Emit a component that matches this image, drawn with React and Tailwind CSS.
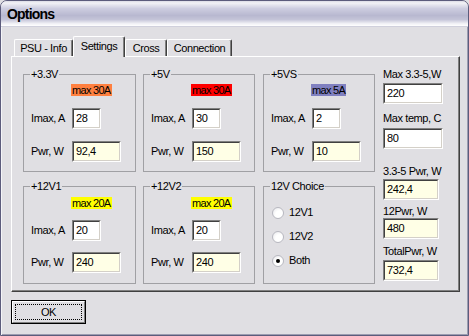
import React from 'react';

const FONT = "font-['Liberation_Sans',Arial,sans-serif] tracking-[-0.4px]";

// sunken edit box, classic windows look
const Edit = ({ value, w, yellow }) => (
  <div className={`h-[21px] ${w} border border-t-[#808080] border-l-[#808080] border-b-white border-r-white`}>
    <div
      className={`h-full flex items-center pl-[2px] text-[11px] leading-[13px] border border-t-[#404040] border-l-[#404040] border-b-[#d4d0c8] border-r-[#d4d0c8] ${
        yellow ? 'bg-[#ffffe6]' : 'bg-white'
      }`}
    >
      {value}
    </div>
  </div>
);

const Group = ({ title, w, children }) => (
  <fieldset className={`${w} h-[104px] border border-[#a0a0a4] p-0 m-0 min-w-0`}>
    <legend className="ml-[6px] px-px text-[11px] leading-[13px]">{title}</legend>
    {children}
  </fieldset>
);

const Rail = ({ title, w, max, maxBg, maxW, imax, pwr, top, gap }) => (
  <Group title={title} w={w}>
    <div className={`${top} ml-[47px] ${maxW} h-[12px] ${maxBg} text-[11px] leading-[12px] tracking-[-0.7px] pl-px whitespace-nowrap`}>
      {max}
    </div>
    <div className={`${gap} flex items-center`}>
      <span className="pl-[7px] w-[48px] text-[11px] leading-[13px]">Imax, A</span>
      <Edit value={imax} w="w-[29px]" />
    </div>
    <div className={`${gap} flex items-center`}>
      <span className="pl-[7px] w-[48px] text-[11px] leading-[13px]">Pwr, W</span>
      <Edit value={pwr} w="w-[49px]" yellow />
    </div>
  </Group>
);

const Radio = ({ label, checked }) => (
  <div className="flex items-center h-[13px] ml-[2px]">
    <div className="w-[12px] h-[12px] rounded-full border border-[#b8b8c0] bg-[radial-gradient(circle_at_65%_65%,#ffffff_40%,#e6e6ea_100%)] flex items-center justify-center">
      {checked && <div className="w-[4px] h-[4px] rounded-full bg-black" />}
    </div>
    <span className="ml-[5px] text-[11px] leading-[13px]">{label}</span>
  </div>
);

const Tab = ({ label, w, active }) =>
  active ? (
    <div
      className={`${w} h-[21px] -mb-px relative z-10 bg-[#e0dfe3] rounded-t-[2px] border-t border-l border-white border-r border-r-[#404040] shadow-[inset_-1px_0_0_#808080] flex justify-center pt-[3px] text-[11px] leading-[13px]`}
    >
      {label}
    </div>
  ) : (
    <div
      className={`${w} h-[17px] rounded-t-[2px] border-t border-l border-white border-r border-r-[#404040] shadow-[inset_-1px_0_0_#808080] flex justify-center pt-[2px] text-[11px] leading-[13px]`}
    >
      {label}
    </div>
  );

const SideLabel = ({ children, mt }) => (
  <div className={`${mt} text-[11px] leading-[13px] whitespace-nowrap`}>{children}</div>
);

const App = () => {
  return (
    <div className={`w-[469px] h-[336px] overflow-hidden bg-[#e0dfe3] text-black ${FONT}`}>
      <div className="w-full h-full flex flex-col rounded-t-[7px] border border-[#5c5c7c] shadow-[inset_1px_0_0_#f4f4f8,inset_-1px_-1px_0_#9c9cb0]">
        {/* title bar */}
        <div className="h-[26px] rounded-t-[6px] flex items-center pl-[6px] pt-px border-b border-[#d0d0dc] bg-[linear-gradient(to_bottom,#dcdce6_0%,#f2f2f6_8%,#cdcde0_30%,#b8b8d0_58%,#c4c4d8_74%,#f0f0f5_90%,#ffffff_100%)]">
          <span className="text-[14px] font-bold leading-[16px] tracking-[-0.8px]">Options</span>
        </div>

        {/* body */}
        <div className="flex-1 flex flex-col pl-[10px] pt-[9px]">
          <div className="flex items-end h-[20px] ml-[3px]">
            <Tab label="PSU - Info" w="w-[59px]" />
            <Tab label="Settings" w="w-[52px]" active />
            <Tab label="Cross" w="w-[42px]" />
            <Tab label="Connection" w="w-[65px]" />
          </div>

          <div className="w-[449px] h-[236px] border-t border-l border-white border-r border-b border-r-[#404040] border-b-[#404040] shadow-[inset_-1px_-1px_0_#808080] pl-[11px] pt-[11px] flex">
            <div className="flex flex-col gap-[8px]">
              <div className="flex">
                <Rail title="+3.3V" w="w-[113px]" max="max 30A" maxBg="bg-[#ff8040]" maxW="w-[41px]" imax="28" pwr="92,4" top="mt-[3px]" gap="mt-[12px]" />
                <div className="ml-[7px]">
                  <Rail title="+5V" w="w-[112px]" max="max 30A" maxBg="bg-[#ff0000]" maxW="w-[41px]" imax="30" pwr="150" top="mt-[3px]" gap="mt-[12px]" />
                </div>
                <div className="ml-[8px]">
                  <Rail title="+5VS" w="w-[112px]" max="max 5A" maxBg="bg-[#8080c0]" maxW="w-[35px]" imax="2" pwr="10" top="mt-[3px]" gap="mt-[12px]" />
                </div>
              </div>
              <div className="flex">
                <Rail title="+12V1" w="w-[113px]" max="max 20A" maxBg="bg-[#ffff00]" maxW="w-[41px]" imax="20" pwr="240" top="mt-[4px]" gap="mt-[11px]" />
                <div className="ml-[7px]">
                  <Rail title="+12V2" w="w-[112px]" max="max 20A" maxBg="bg-[#ffff00]" maxW="w-[41px]" imax="20" pwr="240" top="mt-[4px]" gap="mt-[11px]" />
                </div>
                <div className="ml-[8px]">
                  <Group title="12V Choice" w="w-[112px]">
                    <div className="mt-[13px] pl-[6px] flex flex-col gap-[11px]">
                      <Radio label="12V1" />
                      <Radio label="12V2" />
                      <Radio label="Both" checked />
                    </div>
                  </Group>
                </div>
              </div>
            </div>

            <div className="ml-[8px] flex flex-col">
              <SideLabel mt="mt-0">Max 3.3-5,W</SideLabel>
              <div className="mt-[2px]"><Edit value="220" w="w-[60px]" /></div>
              <SideLabel mt="mt-[8px]">Max temp, C</SideLabel>
              <div className="mt-[3px]"><Edit value="80" w="w-[60px]" /></div>
              <SideLabel mt="mt-[16px]">3.3-5 Pwr, W</SideLabel>
              <div className="mt-[1px]"><Edit value="242,4" w="w-[56px]" yellow /></div>
              <SideLabel mt="mt-[5px]">12Pwr, W</SideLabel>
              <div className="mt-0"><Edit value="480" w="w-[56px]" yellow /></div>
              <SideLabel mt="mt-[6px]">TotalPwr, W</SideLabel>
              <div className="mt-[2px]"><Edit value="732,4" w="w-[56px]" yellow /></div>
            </div>
          </div>

          <div className="mt-[8px] w-[75px] h-[24px] border border-black">
            <div className="h-full border border-t-white border-l-white border-b-[#808080] border-r-[#808080] p-[2px]">
              <div className="h-full border border-dotted border-black flex items-center justify-center text-[11px] leading-[13px]">
                OK
              </div>
            </div>
          </div>
        </div>
      </div>
    </div>
  );
};

export default App;
